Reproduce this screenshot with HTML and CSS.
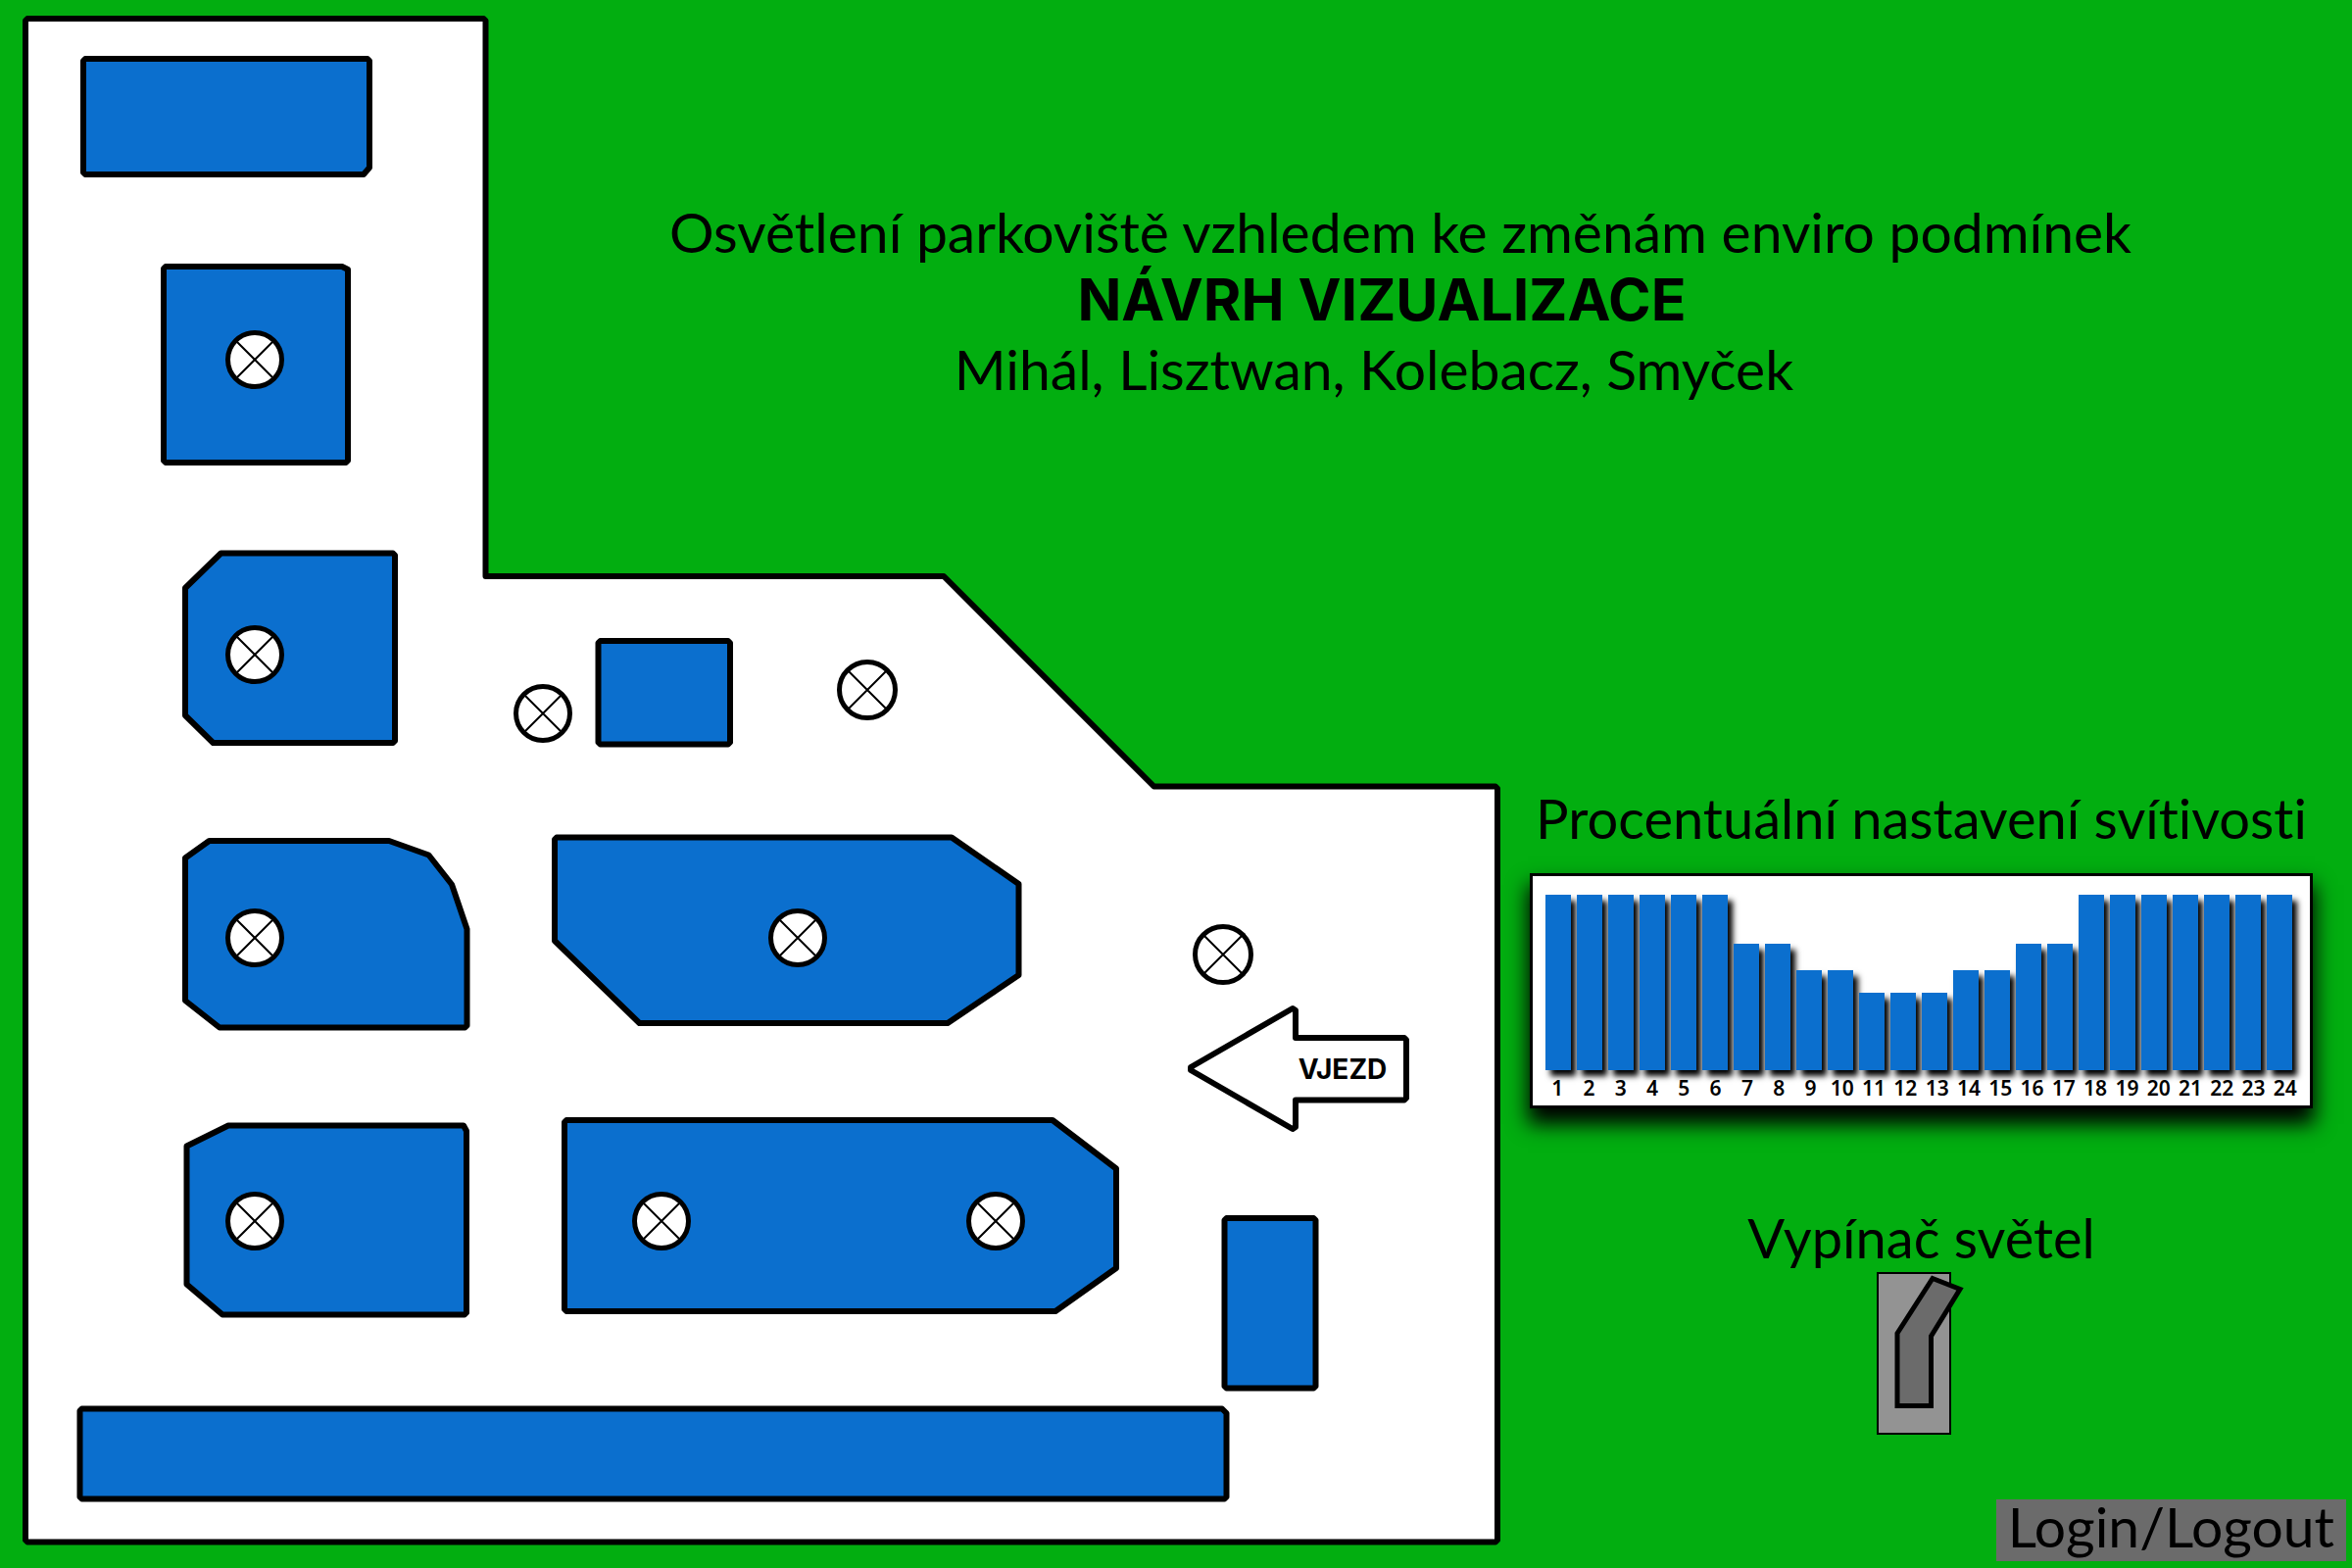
FILE: index.html
```html
<!DOCTYPE html>
<html lang="cs">
<head>
<meta charset="utf-8">
<meta name="viewport" content="width=device-width, initial-scale=1">
<title>Osvětlení parkoviště</title>
<link rel="stylesheet" href="styles.css">
</head>
<body>
<main class="page">
  <svg class="plan" viewBox="0 0 1536 1600" role="img" aria-label="Plán parkoviště">
    <defs>
      <g id="lamp">
        <circle class="lamp-body" r="27.500"/>
        <path class="lamp-cross" d="M-19-19L19 19M19-19L-19 19"/>
      </g>
      <g id="lamp-large">
        <circle class="lamp-body" r="28.500"/>
        <path class="lamp-cross" d="M-20-20L20 20M20-20L-20 20"/>
      </g>
    </defs>
    <path class="ground" d="M28 19H493.500L495.500 21V588H963L1177.500 802.500H1526L1528 804.500V1571.500L1526 1573.500H28L26 1571.500V21Z"/>
    <g class="block">
      <path d="M87 60H375L377 62V171L371 178H87L85 176V62Z"/>
      <path d="M169 272H349L355 275V470L353 472H169L167 470V274Z"/>
      <path d="M189 600L225.500 564.500H401L403 566.500V756L401 758H217.500L189 730Z"/>
      <path d="M189 875.500L213.500 858H397L437.500 872.500L461 902.500L476.500 948V1046.500L474.500 1048.500H224L189 1021Z"/>
      <path d="M568 854.500H971L1039.500 902V995L967 1044H652.500L566 960V856.500Z"/>
      <path d="M612.500 654H743L745 656V757.500L743 759.500H612.500L610.500 757.500V656Z"/>
      <path d="M190.500 1169.500L233 1148.500H473L476 1154V1339.500L474 1341.500H227L190.500 1310.500Z"/>
      <path d="M578 1143H1074L1139 1192.500V1294L1077 1338H578L576 1336V1145Z"/>
      <path d="M1251.500 1243H1340.500L1342.500 1245V1414.500L1340.500 1416.500H1251.500L1249.500 1414.500V1245Z"/>
      <path d="M83.500 1437.500H1247L1251.500 1442V1527.500L1249.500 1529.500H83.500L81.500 1527.500V1439.500Z"/>
    </g>
    <use href="#lamp" x="260" y="367"/>
    <use href="#lamp" x="260" y="668"/>
    <use href="#lamp" x="260" y="957"/>
    <use href="#lamp" x="260" y="1246"/>
    <use href="#lamp" x="554" y="728"/>
    <use href="#lamp" x="814" y="957"/>
    <use href="#lamp" x="675" y="1246"/>
    <use href="#lamp" x="1016" y="1246"/>
    <use href="#lamp-large" x="885" y="704"/>
    <use href="#lamp-large" x="1248" y="974"/>
    <path class="ground" d="M1215 1089L1319 1029L1322 1031V1059H1433L1435 1061V1120.500L1433 1122.500H1322V1150L1319 1152L1215 1092Z"/>
    <text class="entry" x="1370" y="1101">VJEZD</text>
  </svg>

  <header class="intro">
    <p class="intro-topic">Osvětlení parkoviště vzhledem ke změnám enviro podmínek</p>
    <h1 class="intro-title">NÁVRH VIZUALIZACE</h1>
    <p class="intro-authors">Mihál, Lisztwan, Kolebacz, Smyček</p>
  </header>

  <aside class="panel">
    <section class="brightness">
      <h2>Procentuální nastavení svítivosti</h2>
      <div class="chart">
        <div class="bars">
          <i style="height:100%"></i><i style="height:100%"></i><i style="height:100%"></i><i style="height:100%"></i><i style="height:100%"></i><i style="height:100%"></i>
          <i style="height:72%"></i><i style="height:72%"></i><i style="height:57%"></i><i style="height:57%"></i><i style="height:44%"></i><i style="height:44%"></i>
          <i style="height:44%"></i><i style="height:57%"></i><i style="height:57%"></i><i style="height:72%"></i><i style="height:72%"></i><i style="height:100%"></i>
          <i style="height:100%"></i><i style="height:100%"></i><i style="height:100%"></i><i style="height:100%"></i><i style="height:100%"></i><i style="height:100%"></i>
        </div>
        <div class="hours">
          <span>1</span><span>2</span><span>3</span><span>4</span><span>5</span><span>6</span><span>7</span><span>8</span><span>9</span><span>10</span><span>11</span><span>12</span><span>13</span><span>14</span><span>15</span><span>16</span><span>17</span><span>18</span><span>19</span><span>20</span><span>21</span><span>22</span><span>23</span><span>24</span>
        </div>
      </div>
    </section>
    <section class="lights">
      <h2 id="lights-label">Vypínač světel</h2>
      <button class="switch" type="button" aria-labelledby="lights-label">
        <svg width="94" height="168" viewBox="0 0 94 168" aria-hidden="true">
          <path class="switch-plate" d="M2 2H76V166H2Z"/>
          <path class="switch-lever" d="M22 63.500L58 7.500L86 18.500L56.500 66.500V137.500H22Z"/>
        </svg>
      </button>
    </section>
    <button class="login" type="button">Login/Logout</button>
  </aside>
</main>
</body>
</html>
```
FILE: styles.css
```css
* {
  box-sizing: border-box;
}

body {
  margin: 0;
  background: #02ae10;
  color: #000;
  font-family: Lato, "Open Sans", sans-serif;
  font-size: 57px;
  line-height: 70px;
  font-variant-ligatures: none;
}

h1,
h2,
p {
  margin: 0;
  font-size: inherit;
  font-weight: 400;
}

h2 {
  font-size: 56px;
}

button {
  border: 0;
  padding: 0;
  background: none;
  color: inherit;
  font: inherit;
  cursor: pointer;
}

.page {
  display: grid;
  grid-template-columns: minmax(0, 21fr) minmax(0, 43fr) minmax(0, 36fr);
  grid-template-rows: auto 1fr;
  min-height: 100vh;
}

.plan {
  grid-area: 1 / 1 / 3 / 3;
  display: block;
  width: 100%;
}

.ground {
  fill: #fff;
  stroke: #000;
  stroke-width: 6;
  stroke-linejoin: round;
}

.block {
  fill: #0b6fce;
  stroke: #000;
  stroke-width: 6;
  stroke-linejoin: round;
}

.lamp-body {
  fill: #fff;
  stroke: #000;
  stroke-width: 5;
}

.lamp-cross {
  stroke: #000;
  stroke-width: 2;
}

.entry {
  font: 700 28px Inter, sans-serif;
  text-anchor: middle;
}

.intro {
  grid-area: 1 / 2 / 2 / 4;
  padding: 201px 84px 0 0;
  text-align: center;
}

.intro-topic {
  padding-left: 38px;
}

.intro-authors {
  padding-right: 16px;
}

.intro .intro-title {
  font: 700 59px/70px Inter, sans-serif;
}

.panel {
  grid-area: 2 / 3 / 3 / 4;
  display: flex;
  flex-direction: column;
  padding: 389px 6px 7px 25px;
}

.brightness,
.lights {
  margin-right: 34px;
  text-align: center;
  white-space: nowrap;
}

.chart {
  margin-top: 21px;
  border: 3px solid #000;
  padding: 19px 9px 0;
  background: #fff;
  box-shadow: 0 14px 20px 2px #000;
}

.bars {
  display: grid;
  grid-template-columns: repeat(24, 1fr);
  column-gap: 6px;
  align-items: end;
  height: 179px;
  margin: 0 9px 0 4px;
}

.bars i {
  background: #0b6fce;
  box-shadow: 5px 6px 6px #000;
}

.hours {
  display: grid;
  grid-template-columns: repeat(24, 1fr);
  font: 600 21px/36px "Noto Sans", sans-serif;
}

.lights {
  margin-top: 98px;
}

.lights h2 {
  line-height: 68px;
}

.switch {
  display: block;
  margin: 0 auto;
}

.switch svg {
  display: block;
}

.switch-plate {
  fill: #939393;
  stroke: #000;
  stroke-width: 2;
}

.switch-lever {
  fill: #6b6b6b;
  stroke: #000;
  stroke-width: 5;
}

.login {
  align-self: flex-end;
  margin-top: auto;
  padding: 0 12px 8px;
  background: #6b6b6b;
  line-height: 55px;
}
```
